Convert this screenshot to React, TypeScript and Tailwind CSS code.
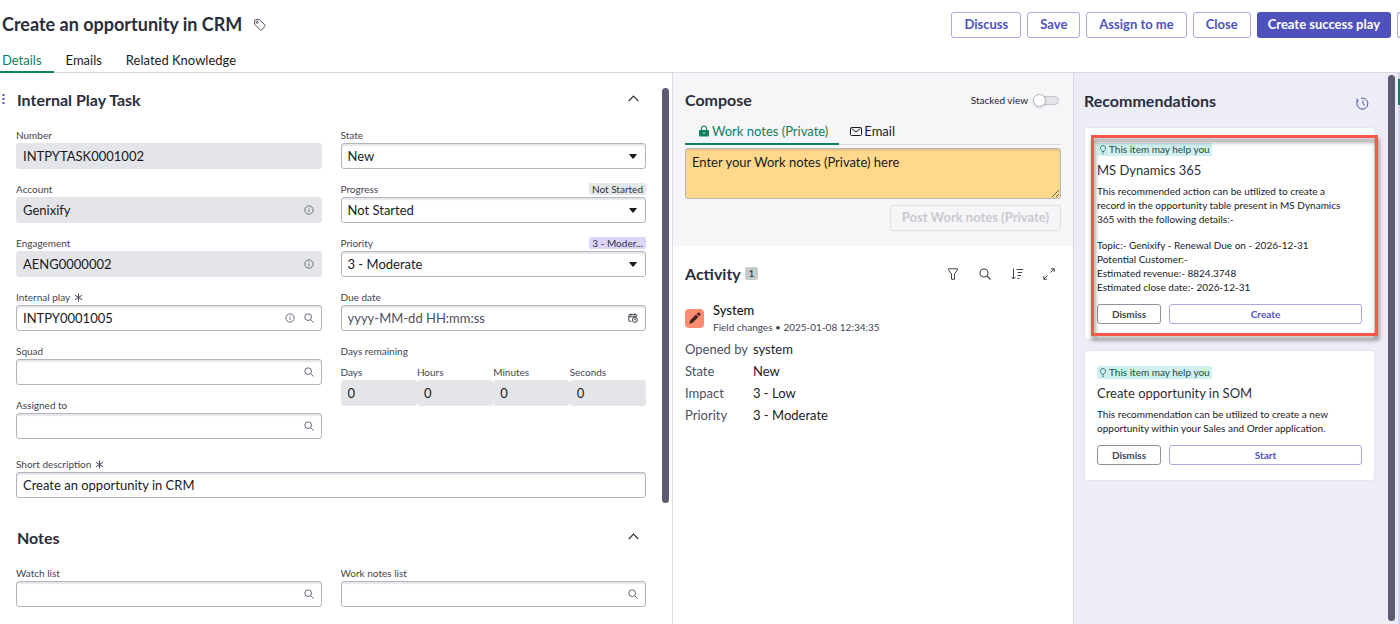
import type { ReactNode } from 'react'

const fieldBox =
  'w-full h-[26px] rounded-[3px] px-1.5 text-[13px] leading-5 text-[#181a1f] outline-none'
const editable =
  'bg-white border border-[#b4b6bf] shadow-[inset_0_2px_1px_#e6e7ea]'
const readonly = 'bg-[#e4e5e9] border border-[#e4e5e9]'
const heading = 'text-[#2a2e3b] font-bold text-base leading-5'

function SearchIcon({ size = 10 }: { size?: number }) {
  return (
    <svg width={size} height={size} viewBox="0 0 12 12" fill="none" stroke="currentColor" strokeWidth="1.1">
      <circle cx="5" cy="5" r="4" />
      <path d="M8 8l3.5 3.5" />
    </svg>
  )
}

function InfoIcon() {
  return (
    <svg width="10" height="10" viewBox="0 0 12 12" fill="none" stroke="currentColor" strokeWidth="1">
      <circle cx="6" cy="6" r="5" />
      <path d="M6 5.4v3.2M6 3.2v1.2" />
    </svg>
  )
}

function CalendarIcon() {
  return (
    <svg width="10" height="10" viewBox="0 0 12 12" fill="none" stroke="#2a2e3b" strokeWidth="1.1">
      <path d="M4 10H2.2Q1 10 1 8.800V3Q1 2 2 2h7.500q1 0 1 1v1M1 4.500h9.500M3.300 .5v2.500M8.200 .5v2.500" />
      <circle cx="8.300" cy="8.300" r="3" />
      <path d="M8.300 6.800v1.600h1.300" />
    </svg>
  )
}

function Required() {
  return (
    <svg width="9" height="9" viewBox="0 0 10 10" stroke="#3f4453" strokeWidth="1.1" aria-label="required">
      <path d="M5 0.500v9M1 2.500l8 5M9 2.500l-8 5" />
    </svg>
  )
}

function Chevron() {
  return (
    <svg width="11" height="7" viewBox="0 0 11 7" fill="none" stroke="#2a2e3b" strokeWidth="1.1">
      <path d="M.8 6L5.500 1l4.700 5" />
    </svg>
  )
}

function Label({ id, children, required }: { id: string; children: ReactNode; required?: boolean }) {
  return (
    <label htmlFor={id} className="flex h-4 items-center gap-1 text-[10px] leading-4 text-[#3f4453]">
      {children}
      {required && <Required />}
    </label>
  )
}

interface FieldProps {
  id: string
  label: string
  value?: string
  placeholder?: string
  required?: boolean
  disabled?: boolean
  icons?: ReactNode
}

function TextField({ id, label, value, placeholder, required, disabled, icons }: FieldProps) {
  return (
    <div>
      <Label id={id} required={required}>{label}</Label>
      <div className="relative">
        <input
          id={id}
          type="text"
          defaultValue={value}
          placeholder={placeholder}
          readOnly={disabled}
          className={`${fieldBox} placeholder:text-[#4b5060] ${disabled ? readonly : editable}`}
        />
        {icons && (
          <div className="absolute inset-y-0 right-2 flex items-center gap-[9px] text-[#555a6b]">{icons}</div>
        )}
      </div>
    </div>
  )
}

function SelectField({ id, label, value, badge, badgeClass }: {
  id: string
  label: string
  value: string
  badge?: string
  badgeClass?: string
}) {
  return (
    <div>
      <div className="flex h-4 items-center justify-between">
        <Label id={id}>{label}</Label>
        {badge && (
          <span className={`h-3 rounded-[2px] px-[3px] text-[10px] leading-3 text-[#2f3340] ${badgeClass}`}>{badge}</span>
        )}
      </div>
      <div className="relative">
        <select id={id} defaultValue={value} className={`${fieldBox} appearance-none ${editable}`}>
          <option>{value}</option>
        </select>
        <svg className="pointer-events-none absolute top-[11px] right-[9px]" width="8" height="5" viewBox="0 0 8 5">
          <path d="M.5 0h7Q8 .3 7.600 .8L4.500 4.600Q4 5 3.500 4.600L.4 .8Q0 .3 .5 0z" fill="#181a1f" />
        </svg>
      </div>
    </div>
  )
}

function SectionHeader({ title, drag }: { title: string; drag?: boolean }) {
  return (
    <div className="relative flex h-[54px] items-center justify-between pr-[7px] pl-px">
      {drag && (
        <svg className="absolute top-[21px] -left-[14px]" width="3" height="10" viewBox="0 0 3 10" fill="#4f52bd">
          <path d="M.5 0h2v2h-2zM.5 4h2v2h-2zM.5 8h2v2h-2z" />
        </svg>
      )}
      <h2 className={heading}>{title}</h2>
      <button type="button" aria-label={`Collapse ${title}`} className="pb-1">
        <Chevron />
      </button>
    </div>
  )
}

function Header() {
  const action =
    'h-[26px] rounded-[3px] border border-[#a9aadf] bg-white px-3 text-[13px] font-bold text-[#4f52bd] whitespace-nowrap'
  return (
    <header className="border-b border-[#d8dae1]">
      <div className="flex h-[50px] items-center justify-between pl-0.5">
        <div className="flex items-center gap-3">
          <h1 className="pb-0.5 text-lg font-bold whitespace-nowrap text-[#2a2e3b]">Create an opportunity in CRM</h1>
          <button type="button" aria-label="Tags">
            <svg width="12" height="12" viewBox="0 0 12 12" fill="none" stroke="#4b5060">
              <path d="M.6 1.600Q.6 .6 1.600 .6h4L11 6.200q.6.6 0 1.200L7.600 11q-.7.600-1.300 0L.6 5.400z" />
              <circle cx="3.300" cy="3.300" r="1" />
            </svg>
          </button>
        </div>
        <div className="flex gap-1.5">
          <button type="button" className={action}>Discuss</button>
          <button type="button" className={action}>Save</button>
          <button type="button" className={action}>Assign to me</button>
          <button type="button" className={action}>Close</button>
          <button type="button" className="h-[26px] rounded-[3px] bg-[#4f52bd] px-[11px] text-[13px] font-bold whitespace-nowrap text-white">
            Create success play
          </button>
          <button type="button" aria-label="More actions" className="h-[26px] w-[3px] rounded-l-[3px] border border-r-0 border-[#a9aadf]" />
        </div>
      </div>
      <nav className="flex h-[22px] text-[13px] leading-5 text-[#181a1f]">
        <a href="#details" className="-mb-px border-b-2 border-[#0c8060] pr-3 pl-0.5 text-[#0c8060]">Details</a>
        <a href="#emails" className="px-3">Emails</a>
        <a href="#knowledge" className="px-3">Related Knowledge</a>
      </nav>
    </header>
  )
}

function DetailsForm() {
  return (
    <form className="flex w-[48%] shrink-0 pl-4">
      <div className="flex-1 pb-4">
        <SectionHeader title="Internal Play Task" drag />
        <div className="grid grid-cols-2 gap-x-[19px]">
          <div className="flex flex-col gap-3">
            <TextField id="number" label="Number" value="INTPYTASK0001002" disabled />
            <TextField id="account" label="Account" value="Genixify" disabled icons={<InfoIcon />} />
            <TextField id="engagement" label="Engagement" value="AENG0000002" disabled icons={<InfoIcon />} />
            <TextField id="play" label="Internal play" value="INTPY0001005" required icons={<><InfoIcon /><SearchIcon /></>} />
            <TextField id="squad" label="Squad" icons={<SearchIcon />} />
            <TextField id="assigned" label="Assigned to" icons={<SearchIcon />} />
          </div>
          <div className="flex flex-col gap-3">
            <SelectField id="state" label="State" value="New" />
            <SelectField id="progress" label="Progress" value="Not Started" badge="Not Started" badgeClass="bg-[#e3e7e6]" />
            <SelectField id="priority" label="Priority" value="3 - Moderate" badge="3 - Moder..." badgeClass="bg-[#dcd5fb]" />
            <TextField id="due" label="Due date" placeholder="yyyy-MM-dd HH:mm:ss" icons={<CalendarIcon />} />
            <fieldset>
              <legend className="h-4 text-[10px] leading-4 text-[#3f4453]">Days remaining</legend>
              <div className="mt-[5px] grid grid-cols-4">
                <TextField id="days" label="Days" value="0" disabled />
                <TextField id="hours" label="Hours" value="0" disabled />
                <TextField id="minutes" label="Minutes" value="0" disabled />
                <TextField id="seconds" label="Seconds" value="0" disabled />
              </div>
            </fieldset>
          </div>
        </div>
        <div className="mt-[17px] mb-[13px]">
          <TextField id="short" label="Short description" value="Create an opportunity in CRM" required />
        </div>
        <SectionHeader title="Notes" />
        <div className="grid grid-cols-2 gap-x-[19px]">
          <TextField id="watch" label="Watch list" icons={<SearchIcon />} />
          <TextField id="worknotes" label="Work notes list" icons={<SearchIcon />} />
        </div>
      </div>
      <div className="ml-4 w-2.5 pt-[15px]">
        <div className="h-[415px] w-[7px] rounded-full bg-[#5d5b72]" />
      </div>
    </form>
  )
}

function Compose() {
  return (
    <section className="bg-[#f6f6f8] px-3 pb-[15px]">
      <div className="flex h-[50px] items-center justify-between pt-1">
        <h2 className={heading}>Compose</h2>
        <label className="flex items-center gap-1 pr-0.5 text-[10px] text-[#181a1f]">
          Stacked view
          <input type="checkbox" role="switch" className="sr-only" />
          <span className="ml-px flex h-[9px] w-[26px] items-center rounded-full border border-[#c3c5cd] bg-[#e4e5e9]">
            <span className="-ml-px h-[13px] w-[13px] shrink-0 rounded-full border border-[#b4b6bf] bg-white shadow-sm" />
          </span>
        </label>
      </div>
      <div role="tablist" className="flex h-[22px] border-b border-[#d8dae1] text-[13px] leading-4">
        <button type="button" role="tab" aria-selected="true" className="-mb-px flex items-start gap-[3px] border-b-2 border-[#0c8060] pr-[11px] pl-3.5 text-[#0c8060]">
          <svg width="10" height="12" viewBox="0 0 10 12" className="mt-0.5">
            <path d="M2.500 5V3.500a2.500 2.500 0 015 0V5" fill="none" stroke="#0c8060" strokeWidth="1.100" />
            <rect y="5" width="10" height="6.500" rx="1" fill="#0c8060" />
            <circle cx="5" cy="8" r=".8" fill="#f6f6f8" />
          </svg>
          Work notes (Private)
        </button>
        <button type="button" role="tab" aria-selected="false" className="flex items-start gap-0.5 px-[11px] text-[#181a1f]">
          <svg width="12" height="9" viewBox="0 0 12 9" className="mt-1" fill="none" stroke="#181a1f">
            <rect x=".5" y=".5" width="11" height="8" rx="1" />
            <path d="M1.500 1.500L6 5l4.500-3.500" />
          </svg>
          Email
        </button>
      </div>
      <textarea
        aria-label="Work notes (Private)"
        placeholder="Enter your Work notes (Private) here"
        className="mt-[3px] block h-[51px] w-full rounded-[3px] border border-[#b4b6bf] bg-[#ffd88c] px-1.5 py-[3px] text-[13px] leading-5 shadow-[inset_0_2px_1px_#e8c67f] placeholder:text-[#181a1f]"
      />
      <div className="mt-1.5 flex justify-end">
        <button type="button" disabled className="h-[26px] rounded-[3px] border border-[#e0e1e5] px-[11px] text-[13px] font-bold text-[#c9cacf]">
          Post Work notes (Private)
        </button>
      </div>
    </section>
  )
}

const changes = [
  ['Opened by', 'system'],
  ['State', 'New'],
  ['Impact', '3 - Low'],
  ['Priority', '3 - Moderate'],
]

function Activity() {
  return (
    <section className="px-3">
      <div className="flex h-[55px] items-center justify-between pr-1.5">
        <div className="flex items-center gap-1">
          <h2 className={heading}>Activity</h2>
          <span className="h-[13px] w-[13px] rounded-[2px] bg-[#c5cccb] text-center text-[10px] leading-[13px] text-[#2a2e3b]">1</span>
        </div>
        <div className="flex items-center gap-5 text-[#3f4453]">
          <button type="button" aria-label="Filter">
            <svg width="12" height="12" viewBox="0 0 12 12" fill="none" stroke="currentColor">
              <path d="M1.500 .8h9v1L7.500 6v5.300h-3V6l-3-4.200z" />
            </svg>
          </button>
          <button type="button" aria-label="Search"><SearchIcon size={12} /></button>
          <button type="button" aria-label="Sort">
            <svg width="12" height="12" viewBox="0 0 12 12" fill="none" stroke="currentColor">
              <path d="M2.500 .5v10.500M.5 9l2 2 2-2M5.500 1.500H12M6.500 4.500H11M6.500 7.500H10M6.500 10.500h2" />
            </svg>
          </button>
          <button type="button" aria-label="Expand">
            <svg width="12" height="12" viewBox="0 0 12 12" fill="none" stroke="currentColor">
              <path d="M8 .8h3.200V4M11.200 .8L7.500 4.500M4 11.200H.8V8M.8 11.200l3.700-3.700" />
            </svg>
          </button>
        </div>
      </div>
      <div className="flex items-center gap-[9px]">
        <span className="flex h-[19px] w-[19px] items-center justify-center rounded-[4px] bg-[#ff8c71]">
          <svg width="12" height="12" viewBox="0 0 12 12" fill="#3c2420">
            <path d="M.3 11.700l.9-3.400L7 2.500 9.500 5 3.700 10.800zM7.700 1.800l1-1q.9-.8 1.800 0l.7.700q.8.900 0 1.800l-1 1z" />
          </svg>
        </span>
        <div>
          <div className="text-[13px] leading-[18px] font-medium text-[#181a1f]">System</div>
          <div className="text-[10px] leading-4 text-[#3f4453]">Field changes • 2025-01-08 12:34:35</div>
        </div>
      </div>
      <dl className="mt-[3px] grid grid-cols-[68px_1fr] text-[13px] leading-[22px]">
        {changes.map(([name, value]) => (
          <div key={name} className="contents">
            <dt className="text-[#4b5060]">{name}</dt>
            <dd className="text-[#181a1f]">{value}</dd>
          </div>
        ))}
      </dl>
    </section>
  )
}

function Card({ title, action, children, highlighted }: {
  title: string
  action: string
  children: ReactNode
  highlighted?: boolean
}) {
  return (
    <article className="relative rounded-[3px] border border-[#e4e5ee] bg-white px-3 py-[15px]">
      <span className="flex h-[13px] w-fit items-center gap-0.5 rounded-[2px] bg-[#cff0ee] px-0.5 text-[10px] leading-[13px] text-[#1d4a4c]">
        <svg width="8" height="9" viewBox="0 0 7 9" fill="none" stroke="#1d6a68" strokeWidth=".8">
          <path d="M2.500 6.500Q2.500 5.500 1.500 4.800a2.600 2.600 0 114 0Q4.500 5.500 4.500 6.500zM2.500 8.200h2" />
        </svg>
        This item may help you
      </span>
      <h3 className="mt-1 text-[13px] leading-5 text-[#2a2e3b]">{title}</h3>
      <div className="mt-1 pr-3 text-[10px] leading-[14px] text-[#181a1f]">{children}</div>
      <div className="mt-2.5 flex gap-2">
        <button type="button" className="h-5 w-16 rounded-[3px] border border-[#8f929e] text-[10px] font-bold text-[#3f4453]">Dismiss</button>
        <button type="button" className="h-5 flex-1 rounded-[3px] border border-[#a9aadf] text-[10px] font-bold text-[#4f52bd]">{action}</button>
      </div>
      {highlighted && (
        <div className="pointer-events-none absolute top-[7px] -right-1 bottom-[3px] left-1.5 border-[3px] border-[#f9574b] drop-shadow-[1px_4px_2px_rgba(0,0,0,0.5)]" />
      )}
    </article>
  )
}

function Recommendations() {
  return (
    <aside className="flex w-[327px] shrink-0 border-l border-[#d8dae8] bg-[#ededf8]">
      <div className="flex-1 pl-2.5">
        <div className="flex h-[54px] items-center justify-between pt-0.5 pr-1.5">
          <h2 className={heading}>Recommendations</h2>
          <button type="button" aria-label="History" className="pt-1">
            <svg width="13" height="13" viewBox="0 0 13 13" fill="none" stroke="#4f52a5">
              <path d="M5 1.300A5.500 5.500 0 112 3.300M.5 1.500l1.500 2-1.700 1M7 3.500v3.300l2 1.500" />
            </svg>
          </button>
        </div>
        <div className="flex flex-col gap-2.5">
          <Card title="MS Dynamics 365" action="Create" highlighted>
            <p>This recommended action can be utilized to create a record in the opportunity table present in MS Dynamics 365 with the following details:-</p>
            <p className="mt-3">Topic:- Genixify - Renewal Due on - 2026-12-31</p>
            <p>Potential Customer:-</p>
            <p>Estimated revenue:- 8824.3748</p>
            <p>Estimated close date:- 2026-12-31</p>
          </Card>
          <Card title="Create opportunity in SOM" action="Start">
            <p>This recommendation can be utilized to create a new opportunity within your Sales and Order application.</p>
          </Card>
        </div>
      </div>
      <div className="ml-[13px] w-2.5 pt-0.5 pb-[3px]">
        <div className="h-full w-[7px] rounded-full bg-[#5d5b72]" />
      </div>
      <div className="w-0.5 bg-[#d3d2f0] pt-1.5">
        <div className="h-[26px] bg-[#0c8060]" />
      </div>
    </aside>
  )
}

export default function App() {
  return (
    <div className="flex min-h-screen flex-col bg-white font-[Lato,sans-serif]">
      <Header />
      <main className="flex flex-1">
        <DetailsForm />
        <div className="min-w-0 flex-1 border-l border-[#d8dae8]">
          <Compose />
          <Activity />
        </div>
        <Recommendations />
      </main>
    </div>
  )
}
